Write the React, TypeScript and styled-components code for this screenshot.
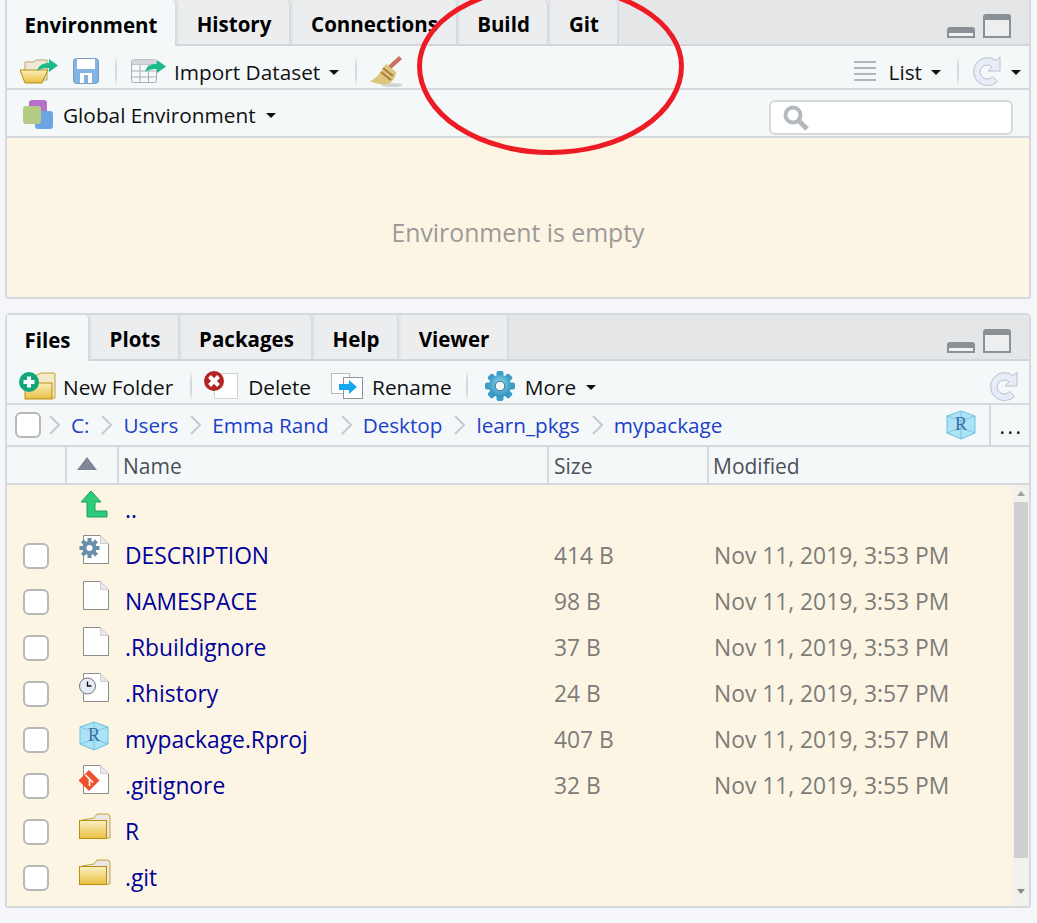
import React from "react";
import styled, { createGlobalStyle } from "styled-components";

const GlobalStyle = createGlobalStyle`
  html, body {
    margin: 0;
    padding: 0;
    background: #f4f6f9;
    font-family: "Open Sans", "Noto Sans", sans-serif;
  }
`;

const Page = styled.div`
  position: relative;
  width: 1037px;
  height: 923px;
  overflow: hidden;
  padding: 0 5px;
  box-sizing: border-box;
`;

const Pane = styled.section<{ $top?: boolean }>`
  display: flex;
  flex-direction: column;
  width: 1026px;
  box-sizing: border-box;
  border: 2px solid #d5d9dc;
  border-top-width: ${(p) => (p.$top ? 0 : 2)}px;
  border-radius: ${(p) => (p.$top ? "0 0 3px 3px" : "5px 5px 3px 3px")};
  height: ${(p) => (p.$top ? 299 : 595)}px;
  margin-top: ${(p) => (p.$top ? 0 : 14)}px;
  background: #f4f8f9;
`;

const TabBar = styled.div`
  display: flex;
  align-items: flex-end;
  height: 44px;
  flex: none;
  background: #e5e6e8;
  border-bottom: 2px solid #d2d6d9;
  gap: 2px;
`;

const Tab = styled.div<{ $active?: boolean; $w: number }>`
  width: ${(p) => p.$w}px;
  height: ${(p) => (p.$active ? 46 : 44)}px;
  flex: none;
  box-sizing: border-box;
  padding-top: 4px;
  display: flex;
  align-items: center;
  justify-content: center;
  font-size: 20.5px;
  font-weight: 700;
  color: #000;
  background: ${(p) => (p.$active ? "#f4f8f9" : "#ecedef")};
  border-right: 2px solid #d8dbde;
  border-radius: 0 5px 0 0;
  margin-bottom: ${(p) => (p.$active ? -2 : 0)}px;
`;

const PaneControls = styled.div`
  margin-left: auto;
  margin-right: 18px;
  margin-bottom: 6px;
  display: flex;
  align-items: flex-end;
  gap: 8px;
`;

const Toolbar = styled.div<{ $h: number; $pt: number }>`
  display: flex;
  align-items: center;
  height: ${(p) => p.$h}px;
  flex: none;
  box-sizing: border-box;
  border-bottom: 2px solid #d5d9dc;
  font-size: 20.8px;
  color: #111;
  padding: ${(p) => p.$pt}px 8px 0 12px;
`;

const ToolItem = styled.div<{ $ml?: number; $gap?: number; $mr?: number }>`
  display: flex;
  align-items: center;
  flex: none;
  margin-left: ${(p) => p.$ml ?? 0}px;
  margin-right: ${(p) => p.$mr ?? 0}px;
  gap: ${(p) => p.$gap ?? 0}px;
`;

const Label = styled.span`
  padding-top: 2px;
`;

const Sep = styled.div<{ $ml: number }>`
  width: 2px;
  height: 30px;
  flex: none;
  margin-left: ${(p) => p.$ml}px;
  background: linear-gradient(#f4f8f9, #d5d9dc 30%, #d5d9dc 70%, #f4f8f9);
`;

const Caret = styled.span<{ $ml?: number }>`
  display: inline-block;
  flex: none;
  width: 0;
  height: 0;
  margin-left: ${(p) => p.$ml ?? 0}px;
  margin-top: 2px;
  border-left: 5px solid transparent;
  border-right: 5px solid transparent;
  border-top: 5px solid #111;
`;

const Spacer = styled.div`
  flex: 1;
`;

const SearchBox = styled.div`
  width: 244px;
  height: 35px;
  box-sizing: border-box;
  border: 2px solid #d5d9dc;
  border-radius: 6px;
  background: #fff;
  display: flex;
  align-items: center;
  padding-left: 12px;
  margin: 6px 8px 0 0;
`;

const EmptyBody = styled.div`
  flex: 1;
  background: #fdf5e3;
  display: flex;
  align-items: center;
  justify-content: center;
  font-size: 24.8px;
  color: #9a9a98;
  padding-top: 28px;
  box-sizing: border-box;
`;

const PathBar = styled.div`
  display: flex;
  align-items: center;
  height: 42px;
  flex: none;
  box-sizing: border-box;
  border-bottom: 2px solid #d5d9dc;
  padding-left: 8px;
  font-size: 20.7px;
  color: #2040c8;
`;

const Crumb = styled.span`
  flex: none;
`;

const Chevron = styled.svg<{ $first?: boolean }>`
  flex: none;
  margin: 0 11px 0 ${(p) => (p.$first ? 8 : 12)}px;
`;

const DotsCell = styled.div`
  width: 40px;
  height: 100%;
  margin-left: 13px;
  flex: none;
  border-left: 2px solid #d5d9dc;
  box-sizing: border-box;
  display: flex;
  align-items: flex-end;
  justify-content: center;
  color: #111;
  font-size: 21px;
  line-height: 31px;
  letter-spacing: 2.5px;
  padding: 0 0 3px 3px;
`;

const HeaderRow = styled.div`
  display: grid;
  grid-template-columns: 60px 52px 430px 160px 1fr;
  height: 38px;
  flex: none;
  box-sizing: border-box;
  border-bottom: 2px solid #d5d9dc;
`;

const HeaderCell = styled.div<{ $sort?: boolean; $pl?: number }>`
  display: flex;
  align-items: center;
  justify-content: ${(p) => (p.$sort ? "center" : "flex-start")};
  padding: ${(p) => (p.$sort ? 0 : 2)}px ${(p) => (p.$sort ? 10 : 0)}px 0 ${(p) => p.$pl ?? 0}px;
  font-size: 21px;
  color: #4b5058;
  border-right: 2px solid #d5d9dc;
  box-sizing: border-box;
  &:last-child {
    border-right: 0;
  }
`;

const SortUp = styled.span`
  width: 0;
  height: 0;
  margin-top: -3px;
  border-left: 10px solid transparent;
  border-right: 10px solid transparent;
  border-bottom: 13px solid #7e8894;
`;

const FileArea = styled.div`
  flex: 1;
  display: flex;
  min-height: 0;
  background: #fdf5e3;
`;

const FileList = styled.div`
  flex: 1;
  padding-top: 2px;
`;

const FileRow = styled.div`
  display: grid;
  grid-template-columns: 60px 52px 430px 160px 1fr;
  height: 46px;
  align-items: center;
  font-size: 22.8px;
`;

const CheckCell = styled.div`
  padding-left: 16px;
  display: flex;
  align-items: center;
`;

const CheckBox = styled.div`
  width: 26px;
  height: 26px;
  flex: none;
  box-sizing: border-box;
  border: 2px solid #b8b8b8;
  border-radius: 6px;
  background: #fff;
`;

const IconCell = styled.div`
  align-self: start;
  padding-left: 12px;
  padding-top: 1px;
  height: 34px;
`;

const Nudge = styled.div<{ $y: number }>`
  margin-top: ${(p) => p.$y}px;
`;

const FileName = styled.div`
  color: #00009b;
  padding-left: 6px;
  margin-top: -2px;
`;

const Meta = styled.div`
  color: #7c7c7a;
  padding-left: 5px;
  margin-top: -2px;
`;

const ScrollTrack = styled.div`
  width: 16px;
  flex: none;
  background: #f1f1ed;
  display: flex;
  flex-direction: column;
  align-items: center;
`;

const ScrollArrow = styled.span<{ $up?: boolean }>`
  width: 0;
  height: 0;
  flex: none;
  margin-top: ${(p) => (p.$up ? 6 : 31)}px;
  border-left: 4px solid transparent;
  border-right: 4px solid transparent;
  border-bottom: ${(p) => (p.$up ? "5px solid #a0a0a0" : "0")};
  border-top: ${(p) => (p.$up ? "0" : "5px solid #8a8a8a")};
`;

const ScrollThumb = styled.div`
  width: 14px;
  height: 356px;
  flex: none;
  margin-top: 6px;
  background: #d1ced0;
`;

const Annotation = styled.svg`
  position: absolute;
  left: 0;
  top: 0;
  pointer-events: none;
`;

const Minimize = () => (
  <svg width="28" height="12" viewBox="0 0 28 12">
    <path d="M0 12V4a3 3 0 0 1 3-3h22a3 3 0 0 1 3 3v8z" fill="#8a9196" />
    <rect x="2" y="7" width="24" height="3" fill="#f0f2f4" />
  </svg>
);

const Maximize = () => (
  <svg width="28" height="24" viewBox="0 0 28 24">
    <path d="M0 24V3a3 3 0 0 1 3-3h22a3 3 0 0 1 3 3v21z" fill="#8a9196" />
    <rect x="2" y="6" width="24" height="16" fill="#eceef0" />
  </svg>
);

const FolderOpen = () => (
  <svg width="40" height="26" viewBox="0 0 40 26">
    <defs>
      <linearGradient id="openFold" x1="0" y1="0" x2="0" y2="1">
        <stop offset="0" stopColor="#fbeeb8" />
        <stop offset="1" stopColor="#e8bf45" />
      </linearGradient>
    </defs>
    <path d="M6 10V4h9l2-2h11v20H6z" fill="#eee9d8" stroke="#b9a463" />
    <path d="M1 12h28l-6 13H6z" fill="url(#openFold)" stroke="#b58d16" />
    <path d="M18 13c2-6 6-8 12-8V1l9 6.500-9 6.500v-4c-4 0-8 0-12 3z" fill="#1cb98a" />
  </svg>
);

const SaveIcon = () => (
  <svg width="26" height="26" viewBox="0 0 26 26">
    <rect x="0.500" y="0.500" width="25" height="25" rx="3" fill="#82b5e3" stroke="#7c9cbb" />
    <rect x="4" y="1" width="18" height="10" fill="#fff" />
    <rect x="7" y="15" width="12" height="10" fill="#fff" />
    <rect x="11" y="17" width="4" height="8" fill="#82b5e3" />
  </svg>
);

const ImportIcon = () => (
  <svg width="38" height="26" viewBox="0 0 38 26">
    <rect x="0.500" y="1.500" width="25" height="23" rx="2" fill="#f6f8fa" stroke="#a6b0bb" />
    <path d="M1 6.500h25M1 13h25M1 19h25M9 6v18M17.500 6v18" stroke="#a6b0bb" fill="none" />
    <path d="M1 1.500h24v5H1z" fill="#d3d8de" />
    <path d="M14 14c2-7 6-8 12-8V2l9 6.500-9 6.500v-4c-4 0-8 0-12 3z" fill="#1cb98a" />
  </svg>
);

const Broom = () => (
  <svg width="33" height="33" viewBox="0 0 33 33">
    <ellipse cx="22" cy="30" rx="11" ry="2" fill="#d4d4d4" />
    <path d="M18 11L29 1l3 3-11 10z" fill="#c9705f" />
    <path d="M16 9l10 8c0 6-4 10-8 12-8 1-14-1-18-3 6-2 10-8 16-17z" fill="#dfc67f" />
    <path d="M13 13l10 8M11 17l10 8" stroke="#a97d38" strokeWidth="2" fill="none" />
  </svg>
);

const ListLines = () => (
  <svg width="22" height="20" viewBox="0 0 22 20">
    <path d="M0 1h22M0 7h22M0 13h22M0 19h22" stroke="#b0b6ba" strokeWidth="2" />
  </svg>
);

const Refresh = () => (
  <svg width="29" height="30" viewBox="0 0 29 30">
    <path
      d="M24 4.500A14 14 0 1 0 25.500 25.500L20.500 20.500A7 7 0 1 1 20 11L16 15H28V1z"
      fill="#e6edf8"
      stroke="#b9c1cb"
    />
  </svg>
);

const EnvIcon = () => (
  <svg width="30" height="29" viewBox="0 0 30 29">
    <rect x="6" y="0" width="18" height="18" rx="3" fill="#b86fc9" />
    <rect x="12" y="11" width="18" height="18" rx="3" fill="#6fa4e4" />
    <rect x="0" y="6" width="18" height="18" rx="3" fill="#b4cb85" />
  </svg>
);

const SearchGlyph = () => (
  <svg width="26" height="26" viewBox="0 0 26 26">
    <circle cx="10" cy="10" r="7.500" fill="none" stroke="#b3b9bd" strokeWidth="4" />
    <path d="M15 15l9 9" stroke="#b3b9bd" strokeWidth="5" />
  </svg>
);

const NewFolder = () => (
  <svg width="37" height="28" viewBox="0 0 37 28">
    <defs>
      <linearGradient id="newFold" x1="0" y1="0" x2="0" y2="1">
        <stop offset="0" stopColor="#fbeeb8" />
        <stop offset="1" stopColor="#e8bf45" />
      </linearGradient>
    </defs>
    <path d="M8 26V8l14-7h13a1 1 0 0 1 1 1v24z" fill="#f1e9c9" stroke="#c3a133" />
    <rect x="6" y="11" width="27" height="16" fill="url(#newFold)" stroke="#b98f12" />
    <circle cx="10" cy="10" r="10" fill="#12a77b" />
    <path d="M10 4.500v11M4.500 10h11" stroke="#fff" strokeWidth="4" />
  </svg>
);

const DeleteIcon = () => (
  <svg width="34" height="30" viewBox="0 0 34 30">
    <rect x="10.500" y="2.500" width="23" height="25" fill="#fff" stroke="#cfd3d6" />
    <circle cx="10" cy="10" r="10" fill="#b32424" />
    <path d="M5.500 5.500l9 9M14.500 5.500l-9 9" stroke="#fff" strokeWidth="4" />
  </svg>
);

const RenameIcon = () => (
  <svg width="32" height="26" viewBox="0 0 32 26">
    <rect x="0.500" y="0.500" width="18" height="20" fill="#fff" stroke="#b8bcc0" />
    <rect x="12.500" y="4.500" width="19" height="21" fill="#fff" stroke="#8f959b" />
    <path d="M8 11h10V7l8 7-8 7v-4H8z" fill="#15a8ee" />
  </svg>
);

const teeth = [0, 45, 90, 135, 180, 225, 270, 315];

const MoreGear = () => (
  <svg width="32" height="32" viewBox="0 0 32 32">
    <defs>
      <radialGradient id="moreGear" cx="0.500" cy="0.400" r="0.600">
        <stop offset="0" stopColor="#8fdcf2" />
        <stop offset="1" stopColor="#2f8fbd" />
      </radialGradient>
    </defs>
    <g fill="#3d9cc8">
      {teeth.map((a) => (
        <rect key={a} x="12.500" y="1" width="7" height="8" rx="2" transform={`rotate(${a} 16 16)`} />
      ))}
    </g>
    <circle cx="16" cy="16" r="11" fill="url(#moreGear)" />
    <circle cx="16" cy="16" r="4.800" fill="#f1f6f8" stroke="#3b6f8a" />
  </svg>
);

const RProject = () => (
  <svg width="30" height="30" viewBox="0 0 30 30">
    <path d="M15 1l14 5v17l-14 6-14-6V6z" fill="#aee2f6" stroke="#67c3dc" />
    <path d="M1 6l14 5 14-5M15 11v18M1 23l14-5 14 5M15 1v17" stroke="#67c3dc" fill="none" strokeWidth="0.800" />
    <text x="15" y="20" textAnchor="middle" fontFamily="Liberation Serif, serif" fontSize="18" fill="#3c6ba8">R</text>
  </svg>
);

const UpArrow = () => (
  <svg width="30" height="30" viewBox="0 0 30 30">
    <path d="M12 3L22 14H16V23H28V29H8V14H2z" fill="#2ecb7a" stroke="#17a460" />
  </svg>
);

const DocBase = () => <path d="M4.500 1.500h17l8 8v20h-25z" fill="#fff" stroke="#8c8c8c" />;
const DocFold = () => <path d="M21.500 1.500v8h8z" fill="#e8e8e8" stroke="#cfcfcf" />;

const PlainDoc = () => (
  <svg width="30" height="32" viewBox="0 0 30 32">
    <DocBase />
    <DocFold />
  </svg>
);

const GearDoc = () => (
  <svg width="30" height="32" viewBox="0 0 30 32">
    <DocBase />
    <DocFold />
    <g fill="#6a8fab">
      {teeth.map((a) => (
        <rect key={a} x="8.500" y="4" width="4" height="5" transform={`rotate(${a} 10.500 14)`} />
      ))}
      <circle cx="10.500" cy="14" r="7" />
    </g>
    <circle cx="10.500" cy="14" r="3" fill="#fff" />
  </svg>
);

const ClockDoc = () => (
  <svg width="30" height="32" viewBox="0 0 30 32">
    <DocBase />
    <DocFold />
    <circle cx="8.500" cy="14" r="8" fill="#e4ebf5" stroke="#777" />
    <path d="M8.500 9.500V14h4" stroke="#111" strokeWidth="1.300" fill="none" />
  </svg>
);

const GitDoc = () => (
  <svg width="30" height="32" viewBox="0 0 30 32">
    <DocBase />
    <DocFold />
    <path d="M10 6L20.500 16.500L10 27L-0.500 16.500z" fill="#f0512d" />
    <path d="M6.500 11l4 4v7M10.500 15l3.500 3.500" stroke="#fff" strokeWidth="1.600" fill="none" />
  </svg>
);

const Folder = () => (
  <svg width="32" height="28" viewBox="0 0 32 28">
    <defs>
      <linearGradient id="fileFold" x1="0" y1="0" x2="0" y2="1">
        <stop offset="0" stopColor="#fbf0c4" />
        <stop offset="1" stopColor="#e9bf3f" />
      </linearGradient>
    </defs>
    <path d="M3 7l12-2 3-4h10a3 3 0 0 1 3 3v21h-3z" fill="#e8e8e6" stroke="#c5a53d" />
    <rect x="0.500" y="7.500" width="27" height="18" fill="url(#fileFold)" stroke="#b98f12" />
  </svg>
);

const files = [
  { name: "..", icon: <UpArrow />, noCheck: true },
  { name: "DESCRIPTION", icon: <GearDoc />, size: "414 B", modified: "Nov 11, 2019, 3:53 PM" },
  { name: "NAMESPACE", icon: <PlainDoc />, size: "98 B", modified: "Nov 11, 2019, 3:53 PM" },
  { name: ".Rbuildignore", icon: <PlainDoc />, size: "37 B", modified: "Nov 11, 2019, 3:53 PM" },
  { name: ".Rhistory", icon: <ClockDoc />, size: "24 B", modified: "Nov 11, 2019, 3:57 PM" },
  { name: "mypackage.Rproj", icon: <Nudge $y={3}><RProject /></Nudge>, size: "407 B", modified: "Nov 11, 2019, 3:57 PM" },
  { name: ".gitignore", icon: <GitDoc />, size: "32 B", modified: "Nov 11, 2019, 3:55 PM" },
  { name: "R", icon: <Nudge $y={3}><Folder /></Nudge> },
  { name: ".git", icon: <Nudge $y={3}><Folder /></Nudge> },
];

const crumbs = ["C:", "Users", "Emma Rand", "Desktop", "learn_pkgs", "mypackage"];

const CrumbChevron = ({ first }: { first?: boolean }) => (
  <Chevron $first={first} width="11" height="22" viewBox="0 0 11 22">
    <path d="M1 2l9 9-9 9" fill="none" stroke="#c6cbcf" strokeWidth="2" />
  </Chevron>
);

function Controls() {
  return (
    <PaneControls>
      <Minimize />
      <Maximize />
    </PaneControls>
  );
}

export default function App() {
  return (
    <Page>
      <GlobalStyle />
      <Pane $top>
        <TabBar>
          <Tab $active $w={170}>Environment</Tab>
          <Tab $w={112}>History</Tab>
          <Tab $w={165}>Connections</Tab>
          <Tab $w={89}>Build</Tab>
          <Tab $w={68}>Git</Tab>
          <Controls />
        </TabBar>
        <Toolbar $h={44} $pt={8}>
          <ToolItem><FolderOpen /></ToolItem>
          <ToolItem $ml={14}><SaveIcon /></ToolItem>
          <Sep $ml={16} />
          <ToolItem $ml={14} $gap={5}>
            <ImportIcon />
            <Label>Import Dataset</Label>
            <Caret $ml={4} />
          </ToolItem>
          <Sep $ml={16} />
          <ToolItem $ml={13}><Broom /></ToolItem>
          <Spacer />
          <ToolItem $gap={13}>
            <ListLines />
            <Label>List</Label>
            <Caret $ml={-4} />
          </ToolItem>
          <Sep $ml={16} />
          <ToolItem $ml={13}>
            <Refresh />
            <Caret $ml={10} />
          </ToolItem>
        </Toolbar>
        <Toolbar $h={48} $pt={3}>
          <ToolItem $ml={4} $gap={10}>
            <EnvIcon />
            Global Environment
            <Caret />
          </ToolItem>
          <Spacer />
          <SearchBox><SearchGlyph /></SearchBox>
        </Toolbar>
        <EmptyBody>Environment is empty</EmptyBody>
      </Pane>

      <Pane>
        <TabBar>
          <Tab $active $w={83}>Files</Tab>
          <Tab $w={88}>Plots</Tab>
          <Tab $w={131}>Packages</Tab>
          <Tab $w={84}>Help</Tab>
          <Tab $w={108}>Viewer</Tab>
          <Controls />
        </TabBar>
        <Toolbar $h={44} $pt={8}>
          <ToolItem $gap={7}><NewFolder /><Label>New Folder</Label></ToolItem>
          <Sep $ml={17} />
          <ToolItem $ml={12} $gap={10}><DeleteIcon /><Label>Delete</Label></ToolItem>
          <ToolItem $ml={20} $gap={9}><RenameIcon /><Label>Rename</Label></ToolItem>
          <Sep $ml={14} />
          <ToolItem $ml={16} $gap={9}>
            <MoreGear />
            <Label>More</Label>
            <Caret $ml={1} />
          </ToolItem>
          <Spacer />
          <ToolItem $mr={3}><Refresh /></ToolItem>
        </Toolbar>
        <PathBar>
          <CheckBox />
          <CrumbChevron first />
          {crumbs.map((c, i) => (
            <React.Fragment key={c}>
              <Crumb>{c}</Crumb>
              {i < crumbs.length - 1 && <CrumbChevron />}
            </React.Fragment>
          ))}
          <Spacer />
          <RProject />
          <DotsCell>...</DotsCell>
        </PathBar>
        <HeaderRow>
          <HeaderCell />
          <HeaderCell $sort><SortUp /></HeaderCell>
          <HeaderCell $pl={4}>Name</HeaderCell>
          <HeaderCell $pl={5}>Size</HeaderCell>
          <HeaderCell $pl={4}>Modified</HeaderCell>
        </HeaderRow>
        <FileArea>
          <FileList>
            {files.map((f) => (
              <FileRow key={f.name}>
                <CheckCell>{!f.noCheck && <CheckBox />}</CheckCell>
                <IconCell>{f.icon}</IconCell>
                <FileName>{f.name}</FileName>
                <Meta>{f.size}</Meta>
                <Meta>{f.modified}</Meta>
              </FileRow>
            ))}
          </FileList>
          <ScrollTrack>
            <ScrollArrow $up />
            <ScrollThumb />
            <ScrollArrow />
          </ScrollTrack>
        </FileArea>
      </Pane>

      <Annotation width="1037" height="923" viewBox="0 0 1037 923">
        <path d="M419.500 66A131 80 0 0 1 681.500 66A131 86.500 0 0 1 419.500 66z" fill="none" stroke="#ed1c24" strokeWidth="5" />
      </Annotation>
    </Page>
  );
}
